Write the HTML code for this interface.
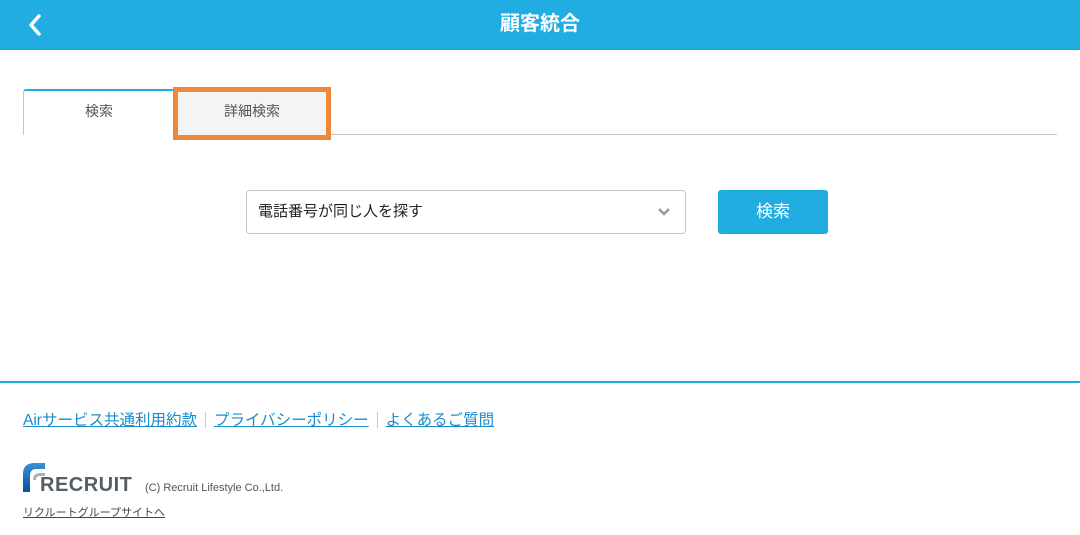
<!DOCTYPE html>
<html><head><meta charset="utf-8"><style>
*{margin:0;padding:0;box-sizing:border-box}
body{width:1080px;height:535px;background:#fff;font-family:"Liberation Sans","Noto Sans CJK JP",sans-serif;position:relative;overflow:hidden;color:#333}
.hdr{position:absolute;left:0;top:0;width:1080px;height:50px;background:#22ade2;color:#fff;text-align:center;font-size:20px;font-weight:bold;line-height:48px}
.abs{position:absolute}
a{color:#1a8ccc;text-decoration:underline}
</style></head><body>
<div class="hdr">顧客統合</div>
<svg class="abs" style="left:26px;top:13px" width="18" height="24" viewBox="0 0 18 24"><path d="M13 3 L5 12 L13 21" stroke="#fff" stroke-width="3.5" fill="none" stroke-linecap="round" stroke-linejoin="round"/></svg>
<div class="abs" style="left:23px;top:134px;width:1034px;height:1px;background:#c8c8c8"></div>
<div class="abs" style="left:23px;top:89px;width:152px;height:46px;border:1px solid #c8c8c8;border-top:2px solid #22ade2;border-bottom:none;background:#fff;border-radius:3px 3px 0 0;text-align:center;line-height:40px;font-size:14px;color:#555">検索</div>
<div class="abs" style="left:173px;top:87px;width:158px;height:53px;border:5px solid #f0883a;background:#f3f4f5;text-align:center;line-height:38px;font-size:14px;color:#555">詳細検索</div>
<div class="abs" style="left:246px;top:190px;width:440px;height:44px;border:1px solid #c8c8c8;border-radius:4px;font-size:15px;line-height:42px;padding-left:11px;color:#222">電話番号が同じ人を探す</div>
<svg class="abs" style="left:657px;top:207px" width="14" height="10" viewBox="0 0 14 10"><path d="M2 2 L7 7 L12 2" stroke="#999" stroke-width="2.5" fill="none"/></svg>
<div class="abs" style="left:718px;top:190px;width:110px;height:44px;background:#22ade2;border-radius:3px;color:#fff;text-align:center;line-height:44px;font-size:17px">検索</div>
<div class="abs" style="left:0;top:381px;width:1080px;height:2px;background:#22ade2"></div>
<div class="abs" style="left:23px;top:408px;font-size:15.5px;white-space:nowrap"><a>Airサービス共通利用約款</a><span style="display:inline-block;width:1px;height:16px;background:#ccc;margin:0 8px;vertical-align:-3px"></span><a>プライバシーポリシー</a><span style="display:inline-block;width:1px;height:16px;background:#ccc;margin:0 8px;vertical-align:-3px"></span><a>よくあるご質問</a></div>
<svg class="abs" style="left:23px;top:462px" width="24" height="31" viewBox="0 0 24 31"><defs><linearGradient id="g" x1="0" y1="0" x2="0" y2="1"><stop offset="0" stop-color="#3a8fd8"/><stop offset="1" stop-color="#0a4fa0"/></linearGradient></defs><path d="M0 30 L0 12 Q0 1 12 1 L22 1 L22 7 L13 7 Q7 7 7 14 L7 30 Z" fill="url(#g)"/><path d="M10 18 Q10 11 17 11 L22 11 L22 14 L17 14 Q13 14 13 18 Z" fill="#aab2b8"/></svg>
<div class="abs" style="left:40px;top:474px;font-size:20px;font-weight:bold;color:#555e66;letter-spacing:0.5px">RECRUIT</div>
<div class="abs" style="left:145px;top:482px;font-size:11px;color:#555">(C) Recruit Lifestyle Co.,Ltd.</div>
<div class="abs" style="left:23px;top:504px;font-size:11px;color:#444;text-decoration:underline">リクルートグループサイトへ</div>
</body></html>
